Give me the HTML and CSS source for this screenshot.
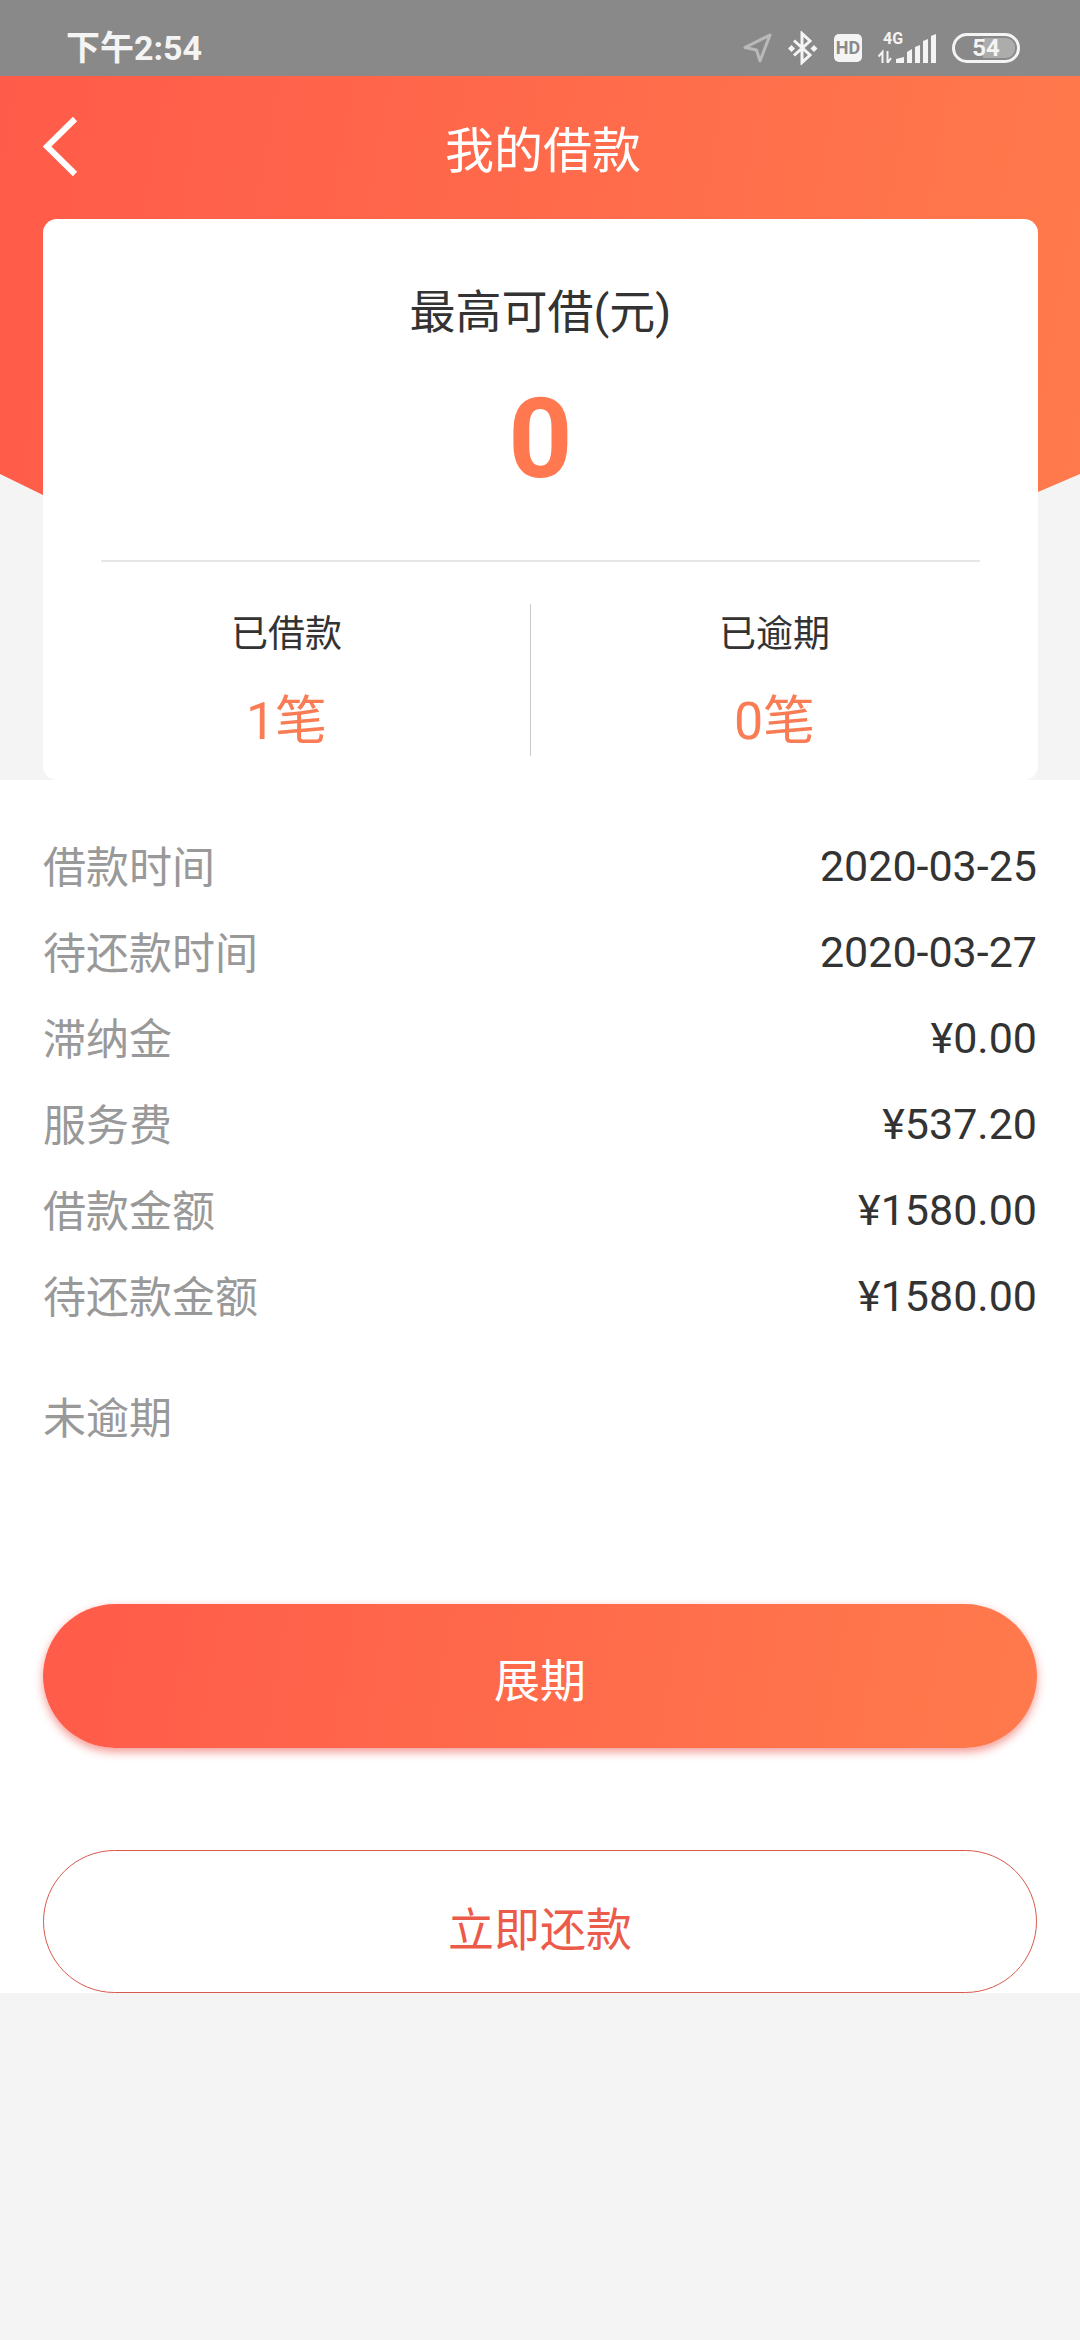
FILE: index.html
```html
<!DOCTYPE html>
<html lang="zh-CN">
<head>
<meta charset="utf-8">
<title>我的借款</title>
<link rel="stylesheet" href="styles.css">
</head>
<body>
<div class="status">
  <span class="time">下午2:54</span>
  <div class="status-icons">
    <svg width="30" height="30" viewBox="0 0 30 30"><path d="M28 2 3 14.500l11.500 2.500 3.500 11z" fill="none" stroke="#b9b9b9" stroke-width="3" stroke-linejoin="round"/></svg>
    <svg width="30" height="34" viewBox="0 0 30 34"><path d="M6 9.500 22 24l-8 7.500V2.500L22 10 6 24.500" fill="none" stroke="#f4f4f4" stroke-width="3"/><path d="M3.500 14 7 17.500 3.500 21 0 17.500zM26 14 29.500 17.500 26 21 22.500 17.500z" fill="#f4f4f4"/></svg>
    <span class="hd">HD</span>
    <div class="net">
      <span class="g4">4G</span>
      <svg width="58" height="29" viewBox="0 0 58 29"><path d="M0.500 22.500 4.500 18V29M9.500 17V29l3.500-5" fill="none" stroke="#f4f4f4" stroke-width="2"/><path d="M18 25 26 23V29H18zM29 18 34 15V29H29zM37 13 42 11V29H37zM45 7 50 5V29H45zM53 2 58 0V29H53z" fill="#f4f4f4"/></svg>
    </div>
    <div class="battery"><span class="level"></span><span class="pct">54</span></div>
  </div>
</div>
<main class="page">
  <div class="hero">
    <div class="hero-bg"></div>
    <header class="nav">
      <svg class="back" width="36" height="62" viewBox="0 0 36 62"><path d="M32 3 4 30.500 32 58" fill="none" stroke="#fff" stroke-width="6"/></svg>
      <h1 class="title">我的借款</h1>
    </header>
    <section class="card">
      <p class="card-label">最高可借(元)</p>
      <p class="card-amount">0</p>
      <div class="card-rule"></div>
      <div class="stats">
        <div class="stat"><span class="stat-label">已借款</span><span class="stat-value">1笔</span></div>
        <div class="stat"><span class="stat-label">已逾期</span><span class="stat-value">0笔</span></div>
      </div>
    </section>
  </div>
  <section class="panel">
    <dl class="rows">
      <div class="row"><dt>借款时间</dt><dd>2020-03-25</dd></div>
      <div class="row"><dt>待还款时间</dt><dd>2020-03-27</dd></div>
      <div class="row"><dt>滞纳金</dt><dd>¥0.00</dd></div>
      <div class="row"><dt>服务费</dt><dd>¥537.20</dd></div>
      <div class="row"><dt>借款金额</dt><dd>¥1580.00</dd></div>
      <div class="row"><dt>待还款金额</dt><dd>¥1580.00</dd></div>
    </dl>
    <p class="state">未逾期</p>
    <button class="btn btn-fill">展期</button>
    <button class="btn btn-line">立即还款</button>
  </section>
</main>
</body>
</html>
```
FILE: styles.css
```css
* { box-sizing: border-box; }
html, body { margin: 0; padding: 0; }
body {
  width: 1080px;
  height: 2340px;
  background: #f4f4f4;
  font-family: Roboto, "Noto Sans CJK SC", sans-serif;
  color: #333;
  overflow: hidden;
}
p, h1, dl, dd { margin: 0; }

.status {
  height: 76px;
  background: #898989;
  display: flex;
  align-items: center;
  justify-content: space-between;
  padding: 20px 60px 0 66px;
  color: #f4f4f4;
}
.time { font-size: 34px; font-weight: 700; line-height: 44px; }
.status-icons { display: flex; align-items: center; gap: 16px; }
.hd {
  width: 28px; height: 28px;
  background: #f4f4f4; color: #898989;
  border-radius: 5px;
  font-size: 18px; font-weight: 700; line-height: 28px; text-align: center;
}
.net { position: relative; width: 58px; height: 29px; }
.net svg { position: absolute; left: 0; top: 0; display: block; }
.g4 { position: absolute; left: 5px; top: -3px; font-size: 16px; line-height: 16px; font-weight: 700; }
.battery {
  position: relative;
  width: 68px; height: 30px;
  border: 3px solid #f4f4f4;
  border-radius: 15px;
  overflow: hidden;
  text-align: center;
}
.level { position: absolute; right: 2px; top: 2px; bottom: 2px; width: 32px; background: #acacac; border-radius: 0 9px 9px 0; }
.pct { position: relative; font-size: 24px; font-weight: 700; line-height: 24px; display: block; }

.hero { position: relative; }
.hero-bg {
  position: absolute;
  left: 0; top: 0; right: 0;
  height: 430px;
  background: linear-gradient(100deg, #ff5b4a 0%, #ff7a4c 100%);
  clip-path: polygon(0 0, 100% 0, 100% 398px, calc(100% - 42px) 416px, 43px 419px, 0 398px);
}
.nav {
  position: relative;
  height: 143px;
  display: flex;
  align-items: center;
  justify-content: center;
  padding-left: 6px;
}
.back { position: absolute; left: 43px; top: 40px; }
.title { font-size: 49px; font-weight: 400; color: #fff; line-height: 68px; margin-top: 8px; }

.card {
  position: relative;
  margin: 0 42px 0 43px;
  height: 561px;
  background: #fff;
  border-radius: 14px;
  display: flex;
  flex-direction: column;
  align-items: center;
}
.card-label { font-size: 46px; line-height: 64px; margin-top: 61px; }
.card-amount { font-size: 112px; font-weight: 700; color: #ff784f; line-height: 130px; margin-top: 30px; }
.card-rule { width: 879px; height: 2px; background: #e6e6e6; margin-top: 56px; }
.stats { display: flex; width: 975px; align-self: flex-start; height: 152px; margin-top: 42px; }
.stat { flex: 1; display: flex; flex-direction: column; align-items: center; }
.stat + .stat { border-left: 1px solid #c9c9c9; }
.stat-label { font-size: 37px; line-height: 50px; margin-top: 6px; }
.stat-value { font-size: 52px; line-height: 72px; color: #f97c55; margin-top: 26px; }

.panel {
  height: 1213px;
  background: #fff;
  padding: 43px 43px 0;
  display: flex;
  flex-direction: column;
}
.row { height: 86px; display: flex; align-items: center; justify-content: space-between; font-size: 43px; }
.row dt { color: #999; margin-bottom: 5px; }
.row dd { color: #333; }
.state { font-size: 43px; color: #999; line-height: 62px; margin-top: 49px; }
.btn {
  display: block;
  width: 100%;
  border: 0;
  font-family: inherit;
  font-size: 46px;
  border-radius: 72px;
  text-align: center;
}
.btn-fill {
  height: 144px;
  padding: 2px 0 0;
  margin-top: 154px;
  background: linear-gradient(100deg, #ff5b4a 0%, #ff7a4c 100%);
  color: #fff;
  box-shadow: 0 4px 10px rgba(235, 70, 60, .55);
}
.btn-line {
  height: 143px;
  padding: 9px 0 0;
  margin-top: 102px;
  background: #fff;
  color: #ec5a4a;
  border: 1px solid #d85a4c;
}
```
